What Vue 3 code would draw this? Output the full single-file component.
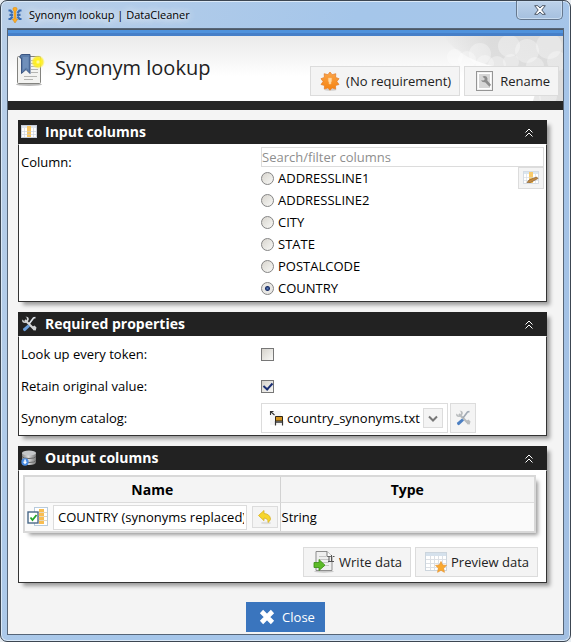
<script setup>
import { ref } from 'vue'

const columns = ['ADDRESSLINE1', 'ADDRESSLINE2', 'CITY', 'STATE', 'POSTALCODE', 'COUNTRY']
const selected = ref('COUNTRY')
const search = ref('')
const everyToken = ref(false)
const retain = ref(true)
const catalog = ref('country_synonyms.txt')
const outputName = ref('COUNTRY (synonyms replaced)')
const open = ref({ input: true, props: true, output: true })
</script>

<template>
  <div class="window">
    <header class="titlebar">
      <svg class="app-icon" viewBox="0 0 14 16">
        <g fill="none" stroke="#3a6db3" stroke-width="2.200">
          <path d="M.5 3.500h2L4.500 6M.5 12h2l2-2.500M1.500 7.800H5" />
          <path d="M13.500 3.500h-2l-2 2.500M13.500 12h-2l-2-2.500M12.500 7.800H9" />
        </g>
        <path d="M7 0l2 1v2L8 4v8h1.800L7 16l-2.800-4H6V4L5 3V1z" fill="#fbab25" stroke="#d08a1c" stroke-width=".5" />
      </svg>
      <span class="caption">Synonym lookup | DataCleaner</span>
      <button class="win-close" aria-label="Close window">
        <svg viewBox="0 0 12 10"><path d="M.7.7h3.200L6 3l2.100-2.300h3.200L7.800 5l3.500 4.300H8.100L6 7 3.900 9.300H.7L4.200 5z" fill="#fff" stroke="#4c5766" stroke-width="1" /></svg>
      </button>
    </header>

    <main class="client">
      <div class="stripe"></div>
      <section class="banner">
        <svg class="bokeh" viewBox="0 0 120 65">
          <defs>
            <linearGradient id="haze" x1="0" x2="1">
              <stop offset="0" stop-color="#d8d8d8" stop-opacity="0" />
              <stop offset=".4" stop-color="#d8d8d8" stop-opacity=".8" />
              <stop offset="1" stop-color="#d8d8d8" stop-opacity=".9" />
            </linearGradient>
          </defs>
          <path d="M0 0h120v65h-30Q100 36 60 32 20 26 0 0z" fill="url(#haze)" />
          <g fill="#fff" fill-opacity=".32">
            <circle cx="12" cy="21" r="8" /><circle cx="24" cy="24" r="9" /><circle cx="37" cy="18" r="11" /><circle cx="42" cy="28" r="9" />
            <circle cx="66" cy="10" r="11" /><circle cx="68" cy="26" r="8" /><circle cx="84" cy="15" r="12" />
            <circle cx="92" cy="30" r="9" /><circle cx="106" cy="10" r="13" /><circle cx="114" cy="25" r="10" />
            <circle cx="54" cy="29" r="9" /><circle cx="105" cy="60" r="9" /><circle cx="90" cy="63" r="8" />
          </g>
        </svg>
        <svg class="book" viewBox="0 0 30 34">
          <ellipse cx="13" cy="31.500" rx="13" ry="1.500" fill="#bbb" />
          <rect x="1.500" y="3.500" width="23" height="27" rx="1" fill="#f3f3f1" stroke="#83837f" />
          <path d="M15 7.500h7M15 10.500h7M15 13.500h7M15 16.500h7M15 19.500h7M8 23.500h13M8 26.500h9" stroke="#b5b5b2" />
          <path d="M4 4q0-2.500 2-2.500h8v19l-4-4-4.500 4V5H4z" fill="#5b7dab" stroke="#3c5682" />
          <path d="M7 6v11l3-2.500 2.500 2V4H7z" fill="#6f8fba" />
          <defs><radialGradient id="sun"><stop offset="0" stop-color="#fffdd0" /><stop offset=".35" stop-color="#fff21a" /><stop offset=".7" stop-color="#fbea2a" stop-opacity=".85" /><stop offset="1" stop-color="#fff36a" stop-opacity="0" /></radialGradient></defs>
          <circle cx="22" cy="9" r="7" fill="url(#sun)" />
        </svg>
        <h1>Synonym lookup</h1>
        <div class="banner-actions">
          <button class="btn">
            <svg class="i20" viewBox="0 0 20 20">
              <defs><linearGradient id="org" x2="0" y2="1"><stop offset="0" stop-color="#fba64a" /><stop offset="1" stop-color="#f5820f" /></linearGradient></defs>
              <ellipse cx="10.500" cy="18.800" rx="6" ry="1" fill="#cfcfcf" />
              <path d="M10 1l2.100 2.700 3.700-1-.2 3.700 3.400 1.300-2.100 2.800 2.100 3-3.500 1 .2 3.600-3.600-1.100L10 19.200 7.900 17l-3.600 1.100.2-3.600-3.500-1 2.100-3L1 7.700l3.400-1.300-.2-3.700 3.700 1z" fill="url(#org)" stroke="#e27a25" stroke-width=".7" stroke-linejoin="round" />
              <path d="M8.300 7h3.400v3.200l-.7.800v2H9v-2l-.7-.8z" fill="#ffd9a3" stroke="#ffc37c" stroke-width=".5" />
            </svg>
            (No requirement)
          </button>
          <button class="btn rename">
            <svg class="i20" viewBox="0 0 20 20">
              <rect x="2.500" y=".5" width="16" height="19" fill="#f1f1f1" stroke="#959595" />
              <rect x="4.500" y="2.500" width="12" height="15" fill="#d6d6d6" stroke="#fff" />
              <path d="M8.500 5.500q4-1.500 5 2l-.2 2 3.700 4.200-1.500 2-4.400-4.500q-3.300.5-4-2l2.400.3 1.500-1.500z" fill="#8c8c8c" />
            </svg>
            Rename
          </button>
        </div>
      </section>
      <div class="divider"></div>

      <div class="content">
        <section class="panel">
          <h2>
            <svg class="i16" viewBox="0 0 16 16">
              <rect x=".5" y="1.500" width="15" height="12" fill="#fff" stroke="#c9cfda" /><path d="M1 2h14v2H1z" fill="#dfe6ef" />
              <path d="M6 2h4v11H6z" fill="#f8c765" /><path d="M1 7.500h14M1 10.500h14M3.500 4v9M12.500 4v9" stroke="#c8cfda" stroke-width=".6" />
            </svg>
            Input columns
            <button class="fold" aria-label="Toggle input columns" @click="open.input = !open.input"><svg viewBox="0 0 8 9"><path d="M.5 4.500L4 1l3.500 3.500M.5 8.500L4 5l3.500 3.500" /></svg></button>
          </h2>
          <div v-if="open.input" class="body form">
            <label class="name top" for="search">Column:</label>
            <div class="column-picker">
              <input id="search" v-model="search" class="search" type="text" placeholder="Search/filter columns" />
              <div class="choices">
                <div class="radios">
                  <label v-for="c in columns" :key="c" class="radio"><input v-model="selected" type="radio" name="column" :value="c" />{{ c }}</label>
                </div>
                <button class="btn edit" aria-label="Edit column expression">
                  <svg class="i16" viewBox="0 0 16 16">
                    <rect x=".5" y="1.500" width="15" height="12" fill="#fff" stroke="#d5dce4" /><path d="M1 2h14v2H1z" fill="#dbe6ef" />
                    <path d="M6 2h4v11H6z" fill="#f9cb6b" /><path d="M1 7.500h14M1 10.500h14M3.500 4v9M12.500 4v9" stroke="#d4d9df" stroke-width=".6" />
                    <path d="M4 12.500l2-2.500 7.500-3L15 8.500 7.500 12.500z" fill="#c4893f" stroke="#7a5528" stroke-width=".6" />
                  </svg>
                </button>
              </div>
            </div>
          </div>
        </section>

        <section class="panel">
          <h2>
            <svg class="i16" viewBox="0 0 16 16">
              <path d="M4 4l8.500 8.500" stroke="#d7d7d7" stroke-width="2.200" /><path d="M1.500 3.500l2 2 2.500-1-.2-2.700L4.500.8q2-.5 3 1T7 5.200L4.500 7q-3 .3-3.500-2zM11 11l2.500-1.500 2 2-.8 3-2.500-.2z" fill="#d0d2d4" />
              <path d="M14.500 1.500l-2 .5-4.500 6" fill="none" stroke="#dfe5ec" stroke-width="1.600" /><path d="M7 8.500l2 2-4.500 4.300q-1 .8-2-.2t-.2-2z" fill="#6a9edb" />
            </svg>
            Required properties
            <button class="fold" aria-label="Toggle required properties" @click="open.props = !open.props"><svg viewBox="0 0 8 9"><path d="M.5 4.500L4 1l3.500 3.500M.5 8.500L4 5l3.500 3.500" /></svg></button>
          </h2>
          <div v-if="open.props" class="body form rows">
            <label class="name" for="token">Look up every token:</label>
            <input id="token" v-model="everyToken" class="check" type="checkbox" />
            <label class="name" for="retain">Retain original value:</label>
            <input id="retain" v-model="retain" class="check" type="checkbox" />
            <label class="name" for="catalog">Synonym catalog:</label>
            <div class="catalog">
              <div class="select">
                <svg class="select-icon" viewBox="0 0 16 16">
                  <path d="M1 1h11v14H1z" fill="#f5f5f5" /><path d="M1.500 5V1.500H4.500M2 2l3.500 3" fill="none" stroke="#333" stroke-width="1.100" />
                  <path d="M6.500 6.500h7v4.500h-7z" fill="#d4941d" stroke="#2d2416" /><path d="M6.500 11v4.500M13.500 11v4.500M6 12.200h8" stroke="#333" stroke-width="1.200" />
                </svg>
                <select id="catalog" v-model="catalog"><option>country_synonyms.txt</option></select>
                <span class="arrow"><svg viewBox="0 0 10 7"><path d="M1 1.500l4 4 4-4" /></svg></span>
              </div>
              <button class="btn tool" aria-label="Configure catalogs">
                <svg class="i16" viewBox="0 0 16 16">
                  <path d="M4 4l8.500 8.500" stroke="#b8bbbd" stroke-width="2.200" /><path d="M1.500 3.500l2 2 2.500-1-.2-2.700L4.500.8q2-.5 3 1T7 5.200L4.500 7q-3 .3-3.500-2zM11 11l2.500-1.500 2 2-.8 3-2.500-.2z" fill="#b9bcbe" />
                  <path d="M14.500 1.500l-2 .5-4.500 6" fill="none" stroke="#a0a9b4" stroke-width="1.600" /><path d="M7 8.500l2 2-4.500 4.300q-1 .8-2-.2t-.2-2z" fill="#4c7fc2" />
                </svg>
              </button>
            </div>
          </div>
        </section>

        <section class="panel">
          <h2>
            <svg class="i16" viewBox="0 0 16 16">
              <defs><linearGradient id="cyl"><stop offset="0" stop-color="#888" /><stop offset=".45" stop-color="#ddd" /><stop offset="1" stop-color="#777" /></linearGradient></defs>
              <path d="M1 3v9q0 3 7 3t7-3V3z" fill="url(#cyl)" /><ellipse cx="8" cy="3" rx="7" ry="2.500" fill="#c4c6c8" />
              <path d="M1 6.500q1 2 7 2t7-2M1 10.500q1 2 7 2t7-2" fill="none" stroke="#666" />
              <circle cx="4" cy="12" r="3.700" fill="#4a8be0" /><path d="M3.300 9.500h1.500v2.300h1.400L4 14.200l-2.200-2.400h1.500z" fill="#fff" />
            </svg>
            Output columns
            <button class="fold" aria-label="Toggle output columns" @click="open.output = !open.output"><svg viewBox="0 0 8 9"><path d="M.5 4.500L4 1l3.500 3.500M.5 8.500L4 5l3.500 3.500" /></svg></button>
          </h2>
          <div v-if="open.output" class="body output">
            <table>
              <thead><tr><th>Name</th><th>Type</th></tr></thead>
              <tbody>
                <tr>
                  <td>
                    <div class="name-cell">
                      <svg class="column-icon" viewBox="0 0 21 20">
                        <rect x="7.500" y=".5" width="13" height="18" fill="#fff" stroke="#b8cbdc" /><path d="M12 2h5v15h-5z" fill="#f8bd51" />
                        <path d="M8 5.500h12M8 9.500h12M8 13.500h12" stroke="#e2d6bb" />
                        <rect x="1" y="5" width="10" height="11" fill="#fff" stroke="#496888" stroke-width="1.400" /><path d="M3.500 10.500l2 2.500 4-5" fill="none" stroke="#24a52b" stroke-width="1.800" />
                      </svg>
                      <input v-model="outputName" type="text" aria-label="Output column name" />
                      <button class="btn undo" aria-label="Reset name">
                        <svg class="i16" viewBox="0 0 16 16"><ellipse cx="9" cy="14" rx="5" ry="1.200" fill="#ddd" /><path d="M1.500 6.500L7 1.500v3q6 .5 6.500 5.500-.3 2-2.500 3.500.5-4-4-4.500v2.700z" fill="#f6d62b" stroke="#d8b023" stroke-width=".8" /></svg>
                      </button>
                    </div>
                  </td>
                  <td>String</td>
                </tr>
              </tbody>
            </table>
            <div class="actions">
              <button class="btn">
                <svg class="i22" viewBox="0 0 22 22">
                  <ellipse cx="11" cy="20.500" rx="10" ry="1.200" fill="#c9c9c9" />
                  <path d="M3 .5h11l5 5v14H3z" fill="#efefef" stroke="#8d8d8d" /><path d="M14 .5v5h5" fill="#fff" stroke="#777" />
                  <path d="M6 5.500h7M6 8.500h10M6 11.500h10M10 14.500h6" stroke="#c6c6c6" />
                  <path d="M16 5v5.500M18.500 4v6.500M15 10.500h6M20 5.500h1.500" stroke="#555" />
                  <path d="M1 11.500h5v-3l6 5.700-6 5.300v-3H1z" fill="#5cba27" stroke="#378b13" stroke-width=".8" />
                </svg>
                Write data
              </button>
              <button class="btn">
                <svg class="i22" viewBox="0 0 22 22">
                  <rect x=".5" y="1.500" width="21" height="18" fill="#fff" stroke="#ccd5dd" /><path d="M1 2h20v3H1z" fill="#d5e1ec" />
                  <path d="M1 8.500h20M1 12.500h20M1 16.500h20M5.500 5v14M9.500 5v14M13.500 5v14M17.500 5v14" stroke="#dce0e5" />
                  <path d="M16 10.500l1.600 3.500 3.900.4-2.900 2.700.8 4.200-3.400-2-3.400 2 .8-4.200-2.900-2.700 3.900-.4z" fill="#faa930" stroke="#e59431" stroke-width=".7" />
                </svg>
                Preview data
              </button>
            </div>
          </div>
        </section>

        <button class="close">
          <svg viewBox="0 0 16 16"><path d="M2.500 2.500l11 11M13.500 2.500l-11 11" stroke="#fff" stroke-width="4.600" /></svg>
          Close
        </button>
      </div>
    </main>
  </div>
</template>

<style>
body { background: #e8edf2; }
</style>

<style scoped>
* { box-sizing: border-box; }
.window {
  min-height: 100vh;
  display: flex;
  flex-direction: column;
  padding: 0 7px 7px;
  border: 1px solid #3c4652;
  border-radius: 7px;
  background: linear-gradient(110deg, #b9cfe8 0, #a5c6ea 45%, #a6c6ea 65%, #a2bfe2 100%);
  box-shadow: inset 0 0 0 1px #dbe9f7;
  font: 13px/18px "Open Sans", "Noto Sans", sans-serif;
  color: #000;
}
button, input, select { font: inherit; color: inherit; margin: 0; }
svg { display: block; flex: none; }
.i16 { width: 16px; height: 16px; }
.i20 { width: 20px; height: 20px; }
.i22 { width: 22px; height: 22px; }
.titlebar { display: flex; align-items: center; height: 28px; }
.app-icon { width: 14px; height: 16px; }
.caption { margin-left: 7px; flex: 1; font-size: 11px; text-shadow: 0 0 8px #fff, 0 0 8px #fff; }
.win-close {
  align-self: flex-start;
  width: 47px;
  height: 19px;
  padding: 0;
  display: grid;
  place-items: center;
  border: 1px solid #66788e;
  border-top: 0;
  border-radius: 0 0 5px 5px;
  background: linear-gradient(#bdd2ea, #a5c0df);
  box-shadow: inset 0 0 0 1px #c9dcf0;
}
.win-close svg { width: 12px; height: 10px; }
.client { flex: 1; border-top: 1px solid #4c5866; background: #f4f4f4; box-shadow: 0 0 0 1px #566577; }
.stripe { height: 6px; background: linear-gradient(#4f92dc 50%, #467fc8 50%); }
.banner { position: relative; display: flex; height: 65px; padding: 0 4px 5px 8px; background: linear-gradient(#eaeaea, #fff 62%); }
.bokeh { position: absolute; top: 0; right: 0; width: 120px; height: 65px; }
.book { width: 30px; height: 34px; margin-top: 17px; }
h1 { margin: 16px 0 0 9px; font-size: 20px; font-weight: 400; line-height: 32px; color: #222; white-space: nowrap; }
.banner-actions { position: relative; display: flex; align-items: flex-end; gap: 4px; margin-left: auto; }
.btn {
  display: flex;
  align-items: center;
  gap: 4px;
  height: 30px;
  padding: 0 8px 0 9px;
  border: 1px solid #dcdcdc;
  background: #f4f4f4;
  white-space: nowrap;
  color: #222;
}
.banner-actions .btn { gap: 6px; }
.divider { height: 9px; background: #262626; }
.content { display: flex; flex-direction: column; gap: 10px; padding: 10px 16px 2px 10px; }
.panel { box-shadow: 4px 4px 4px -1px #999; }
h2 {
  display: flex;
  align-items: center;
  height: 24px;
  margin: 0;
  padding: 0 14px 0 3px;
  gap: 8px;
  background: #222;
  color: #fff;
  font-size: 14px;
  font-weight: 700;
}
.fold { margin-left: auto; padding: 0; border: 0; background: none; }
.fold svg { width: 8px; height: 9px; fill: none; stroke: #fff; }
.body { border: 1px solid #333; border-top-color: #fff; background: #fff; }
.form { display: grid; grid-template-columns: 240px 1fr; padding: 2px; }
.rows { grid-auto-rows: 32px; align-items: center; padding: 1px 2px; }
.top { padding-top: 6px; }
.column-picker { min-width: 0; }
.search { display: block; width: 100%; height: 20px; padding: 0; border: 1px solid #dcdcdc; border-radius: 0; }
.search::placeholder { color: #8e8e8e; opacity: 1; }
.choices { display: flex; justify-content: space-between; align-items: flex-start; }
.radio { display: flex; align-items: center; gap: 4px; height: 22px; }
.radio input {
  appearance: none;
  width: 13px;
  height: 13px;
  border: 1px solid #858585;
  border-radius: 50%;
  background: linear-gradient(135deg, #d8d5ce, #f8f8f6);
}
.radio input:checked { background: radial-gradient(circle, #5a7fc0 0, #1b2f66 2px, #e8e7e4 3px); }
.edit { width: 26px; height: 22px; padding: 0; justify-content: center; }
.check {
  appearance: none;
  display: grid;
  place-items: center;
  width: 13px;
  height: 13px;
  border: 1px solid #777;
  background: linear-gradient(135deg, #d6d3cc, #f8f8f6);
}
.check:checked::after { content: ""; width: 4px; height: 7px; border: solid #1a2f73; border-width: 0 2px 2px 0; transform: translateY(-1px) rotate(42deg); }
.catalog { display: flex; gap: 2px; }
.select { position: relative; width: 187px; height: 30px; }
.select select { appearance: none; width: 100%; height: 30px; padding: 0 25px; border: 1px solid #dcdcdc; border-radius: 0; background: #fff; }
.select-icon { position: absolute; left: 8px; top: 7px; width: 16px; height: 16px; pointer-events: none; }
.arrow { position: absolute; right: 5px; top: 5px; width: 20px; height: 20px; display: grid; place-items: center; border: 1px solid #dcdcdc; background: #f4f4f4; pointer-events: none; }
.arrow svg { width: 10px; height: 7px; fill: none; stroke: #777; stroke-width: 2; }
.tool { width: 26px; padding: 0; justify-content: center; }
.output { padding: 4px 10px 5px 4px; }
table { width: 100%; table-layout: fixed; border-collapse: separate; border-spacing: 0; border: 2px solid #d8d8d8; background: #fafafa; box-shadow: 4px 4px 4px -2px #999; }
th { height: 26px; padding: 0; background: #f4f4f4; border-bottom: 1px solid #dcdcdc; font-size: 14px; }
th + th, td + td { border-left: 1px solid #d2d2d2; }
td { height: 28px; padding: 0 1px; }
.name-cell { display: flex; align-items: center; gap: 5px; padding: 0 1px; }
.name-cell input { flex: 1; min-width: 0; height: 25px; padding: 0 2px 0 4px; border: 1px solid #dcdcdc; border-radius: 0; }
.column-icon { width: 21px; height: 20px; }
.undo { width: 26px; height: 22px; padding: 0; justify-content: center; }
.actions { display: flex; justify-content: flex-end; gap: 4px; margin: 14px -2px 0 0; }
.close {
  align-self: center;
  display: flex;
  align-items: center;
  gap: 7px;
  height: 30px;
  margin: 9px -6px 0 0;
  padding: 0 10px 0 13px;
  border: 0;
  background: #3a75be;
  color: #fff;
}
.close svg { width: 16px; height: 16px; }
</style>
